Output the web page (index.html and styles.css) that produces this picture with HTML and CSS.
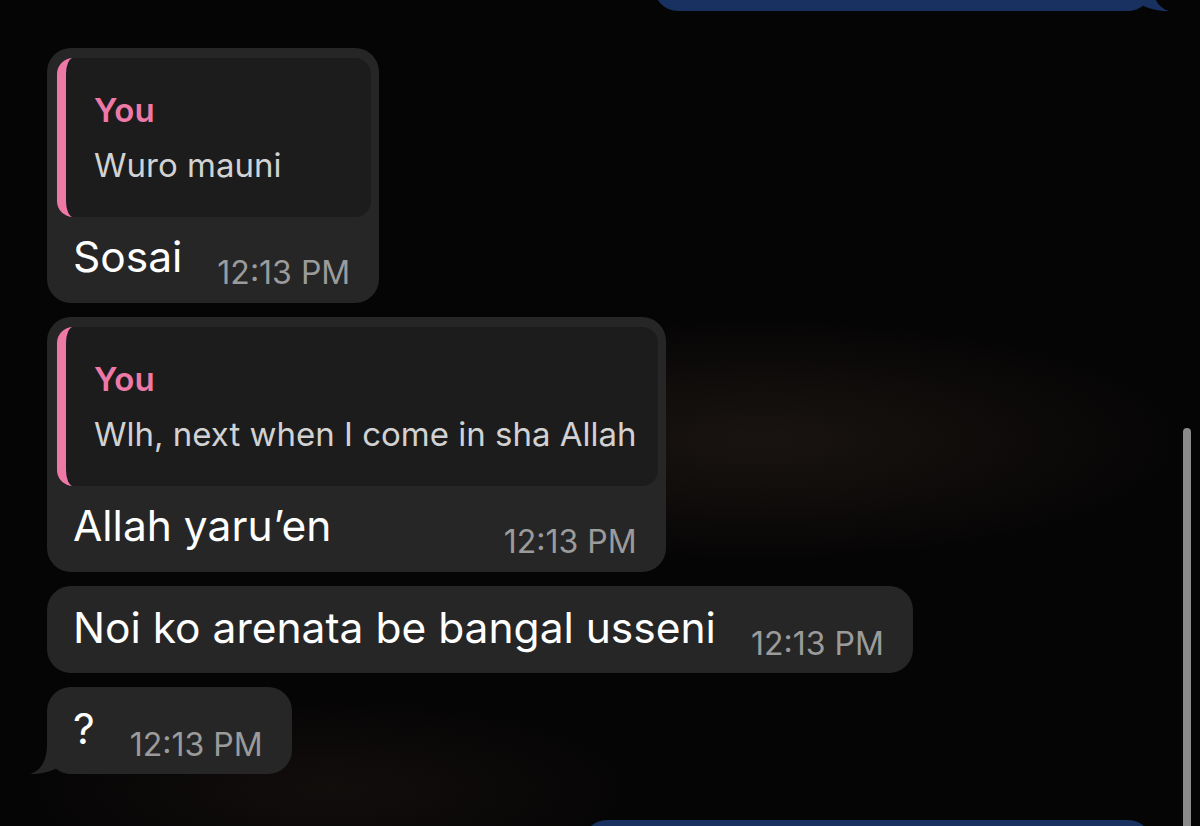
FILE: index.html
```html
<!DOCTYPE html>
<html lang="en">
<head>
  <meta charset="UTF-8" />
  <title>Chat</title>
  <link rel="stylesheet" href="styles.css">
</head>
<body>
  <div class="chat">

    <div class="row out first">
      <div class="bubble sent tall">
        <svg class="tail tail-right" width="45" height="40" viewBox="-17 -40 45 40">
          <path d="M28 -40 L0 -40 L0 -30 C0 -12 -7 -3 -17 0 C-8 0.5 3 -2 10 -6 C14 -2 20 0 28 0 Z" />
        </svg>
      </div>
    </div>

    <div class="row in">
      <div class="bubble recv reply">
        <div class="quote">
          <div class="quote-name">You</div>
          <div class="quote-text">Wuro mauni</div>
        </div>
        <div class="msg">
          <span class="text">Sosai</span>
          <span class="time">12:13 PM</span>
        </div>
      </div>
    </div>

    <div class="row in">
      <div class="bubble recv reply">
        <div class="quote">
          <div class="quote-name">You</div>
          <div class="quote-text">Wlh, next when I come in sha Allah</div>
        </div>
        <div class="msg">
          <span class="text">Allah yaru’en</span>
          <span class="time">12:13 PM</span>
        </div>
      </div>
    </div>

    <div class="row in">
      <div class="bubble recv plain">
        <div class="msg">
          <span class="text">Noi ko arenata be bangal usseni</span>
          <span class="time">12:13 PM</span>
        </div>
      </div>
    </div>

    <div class="row in">
      <div class="bubble recv plain">
        <div class="msg">
          <span class="text">?</span>
          <span class="time">12:13 PM</span>
        </div>
        <svg class="tail tail-left" width="45" height="40" viewBox="-17 -40 45 40">
          <path d="M28 -40 L0 -40 L0 -30 C0 -12 -7 -3 -17 0 C-8 0.5 3 -2 10 -6 C14 -2 20 0 28 0 Z" />
        </svg>
      </div>
    </div>

    <div class="row out last">
      <div class="bubble sent tall wide"></div>
    </div>

  </div>

  <div class="scrollbar"></div>
</body>
</html>
```

FILE: styles.css
```css
body {
  margin: 0;
  height: 826px;
  overflow: hidden;
  background-color: #060505;
  background-image:
    radial-gradient(ellipse 420px 120px at 760px 440px, rgba(48, 38, 32, 0.45), transparent),
    radial-gradient(ellipse 300px 90px at 330px 790px, rgba(40, 30, 26, 0.35), transparent);
  font-family: "Inter", "Liberation Sans", sans-serif;
  color: #fff;
}

.chat {
  display: flex;
  flex-direction: column;
  gap: 14px;
  padding-left: 47px;
  padding-right: 48px;
}

.row {
  display: flex;
}

.row.out {
  justify-content: flex-end;
}

.row.first {
  margin-top: -69px;
  margin-bottom: 23px;
}

.row.last {
  margin-top: 32px;
}

.bubble {
  position: relative;
  border-radius: 24px;
}

.recv {
  background: #262627;
}

.sent {
  background: #183160;
  width: 498px;
}

.sent.tall {
  height: 80px;
}

.sent.wide {
  width: 569px;
}

.reply {
  padding: 10px 8px 21px 10px;
}

.plain {
  padding: 17px 29px 20px 26px;
}

.quote {
  background: #1c1c1d;
  border-left: 9px solid #ee79a7;
  border-radius: 16px;
  padding: 30px 21px 30px 28px;
}

.quote-name {
  color: #ee79a7;
  font-size: 33px;
  font-weight: 600;
  line-height: 44px;
}

.quote-text {
  color: #d2d2d2;
  font-size: 33px;
  line-height: 44px;
  margin-top: 11px;
  white-space: nowrap;
}

.msg {
  display: flex;
  align-items: flex-end;
  justify-content: space-between;
}

.reply .msg {
  margin-top: 15px;
  padding: 0 21px 0 16px;
}

.text {
  font-size: 42.5px;
  line-height: 50px;
  white-space: nowrap;
}

.time {
  color: #9b9b9b;
  font-size: 32px;
  line-height: 30px;
  margin-left: 35px;
  margin-bottom: -6px;
  white-space: nowrap;
}

.tail {
  position: absolute;
  bottom: 0;
}

.tail-left {
  left: -17px;
  fill: #262627;
}

.tail-right {
  right: -17px;
  fill: #183160;
  transform: scaleX(-1);
}

.scrollbar {
  position: absolute;
  top: 428px;
  right: 9px;
  bottom: 0;
  width: 8px;
  background: #8a8a8a;
  border-radius: 4px 4px 0 0;
}
```
